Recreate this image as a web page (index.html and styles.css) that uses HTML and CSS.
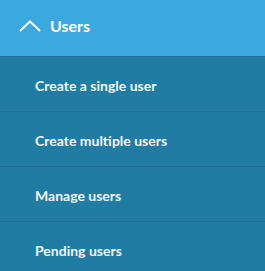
FILE: index.html
```html
<!doctype html>
<html lang="en">
  <head>
    <meta charset="UTF-8" />
    <title>Users</title>
    <link rel="stylesheet" href="styles.css">
  </head>
  <body>
    <nav class="menu">
      <div class="menu-head">
        <svg class="chevron" width="22" height="12" viewBox="0 0 22 12">
          <path d="M1 11 L11 1.5 L21 11" fill="none" stroke="#fff" stroke-width="2" />
        </svg>
        <span class="head-title">Users</span>
      </div>
      <a class="menu-item" href="#">Create a single user</a>
      <a class="menu-item" href="#">Create multiple users</a>
      <a class="menu-item" href="#">Manage users</a>
      <a class="menu-item" href="#">Pending users</a>
    </nav>
  </body>
</html>
```

FILE: styles.css
```css
* {
  margin: 0;
  padding: 0;
  box-sizing: border-box;
}
body {
  background-color: #217ca4;
  font-family: Lato, "Open Sans", sans-serif;
  color: #fff;
}
.menu {
  display: flex;
  flex-direction: column;
}
.menu-head {
  display: flex;
  align-items: center;
  height: 57px;
  padding-left: 19px;
  padding-bottom: 5px;
  background-color: #3aa9dd;
  border-bottom: 1px solid #1d6f95;
}
.menu-head .chevron {
  margin-right: 9px;
  margin-top: 1px;
}
.menu-head .head-title {
  font-size: 16px;
  font-weight: 700;
}
.menu-item {
  display: flex;
  align-items: center;
  height: 55px;
  padding-left: 35px;
  padding-top: 3px;
  color: #f2f7fa;
  text-decoration: none;
  font-size: 14px;
  font-weight: 700;
  border-bottom: 1px solid #1d6f95;
}
```
